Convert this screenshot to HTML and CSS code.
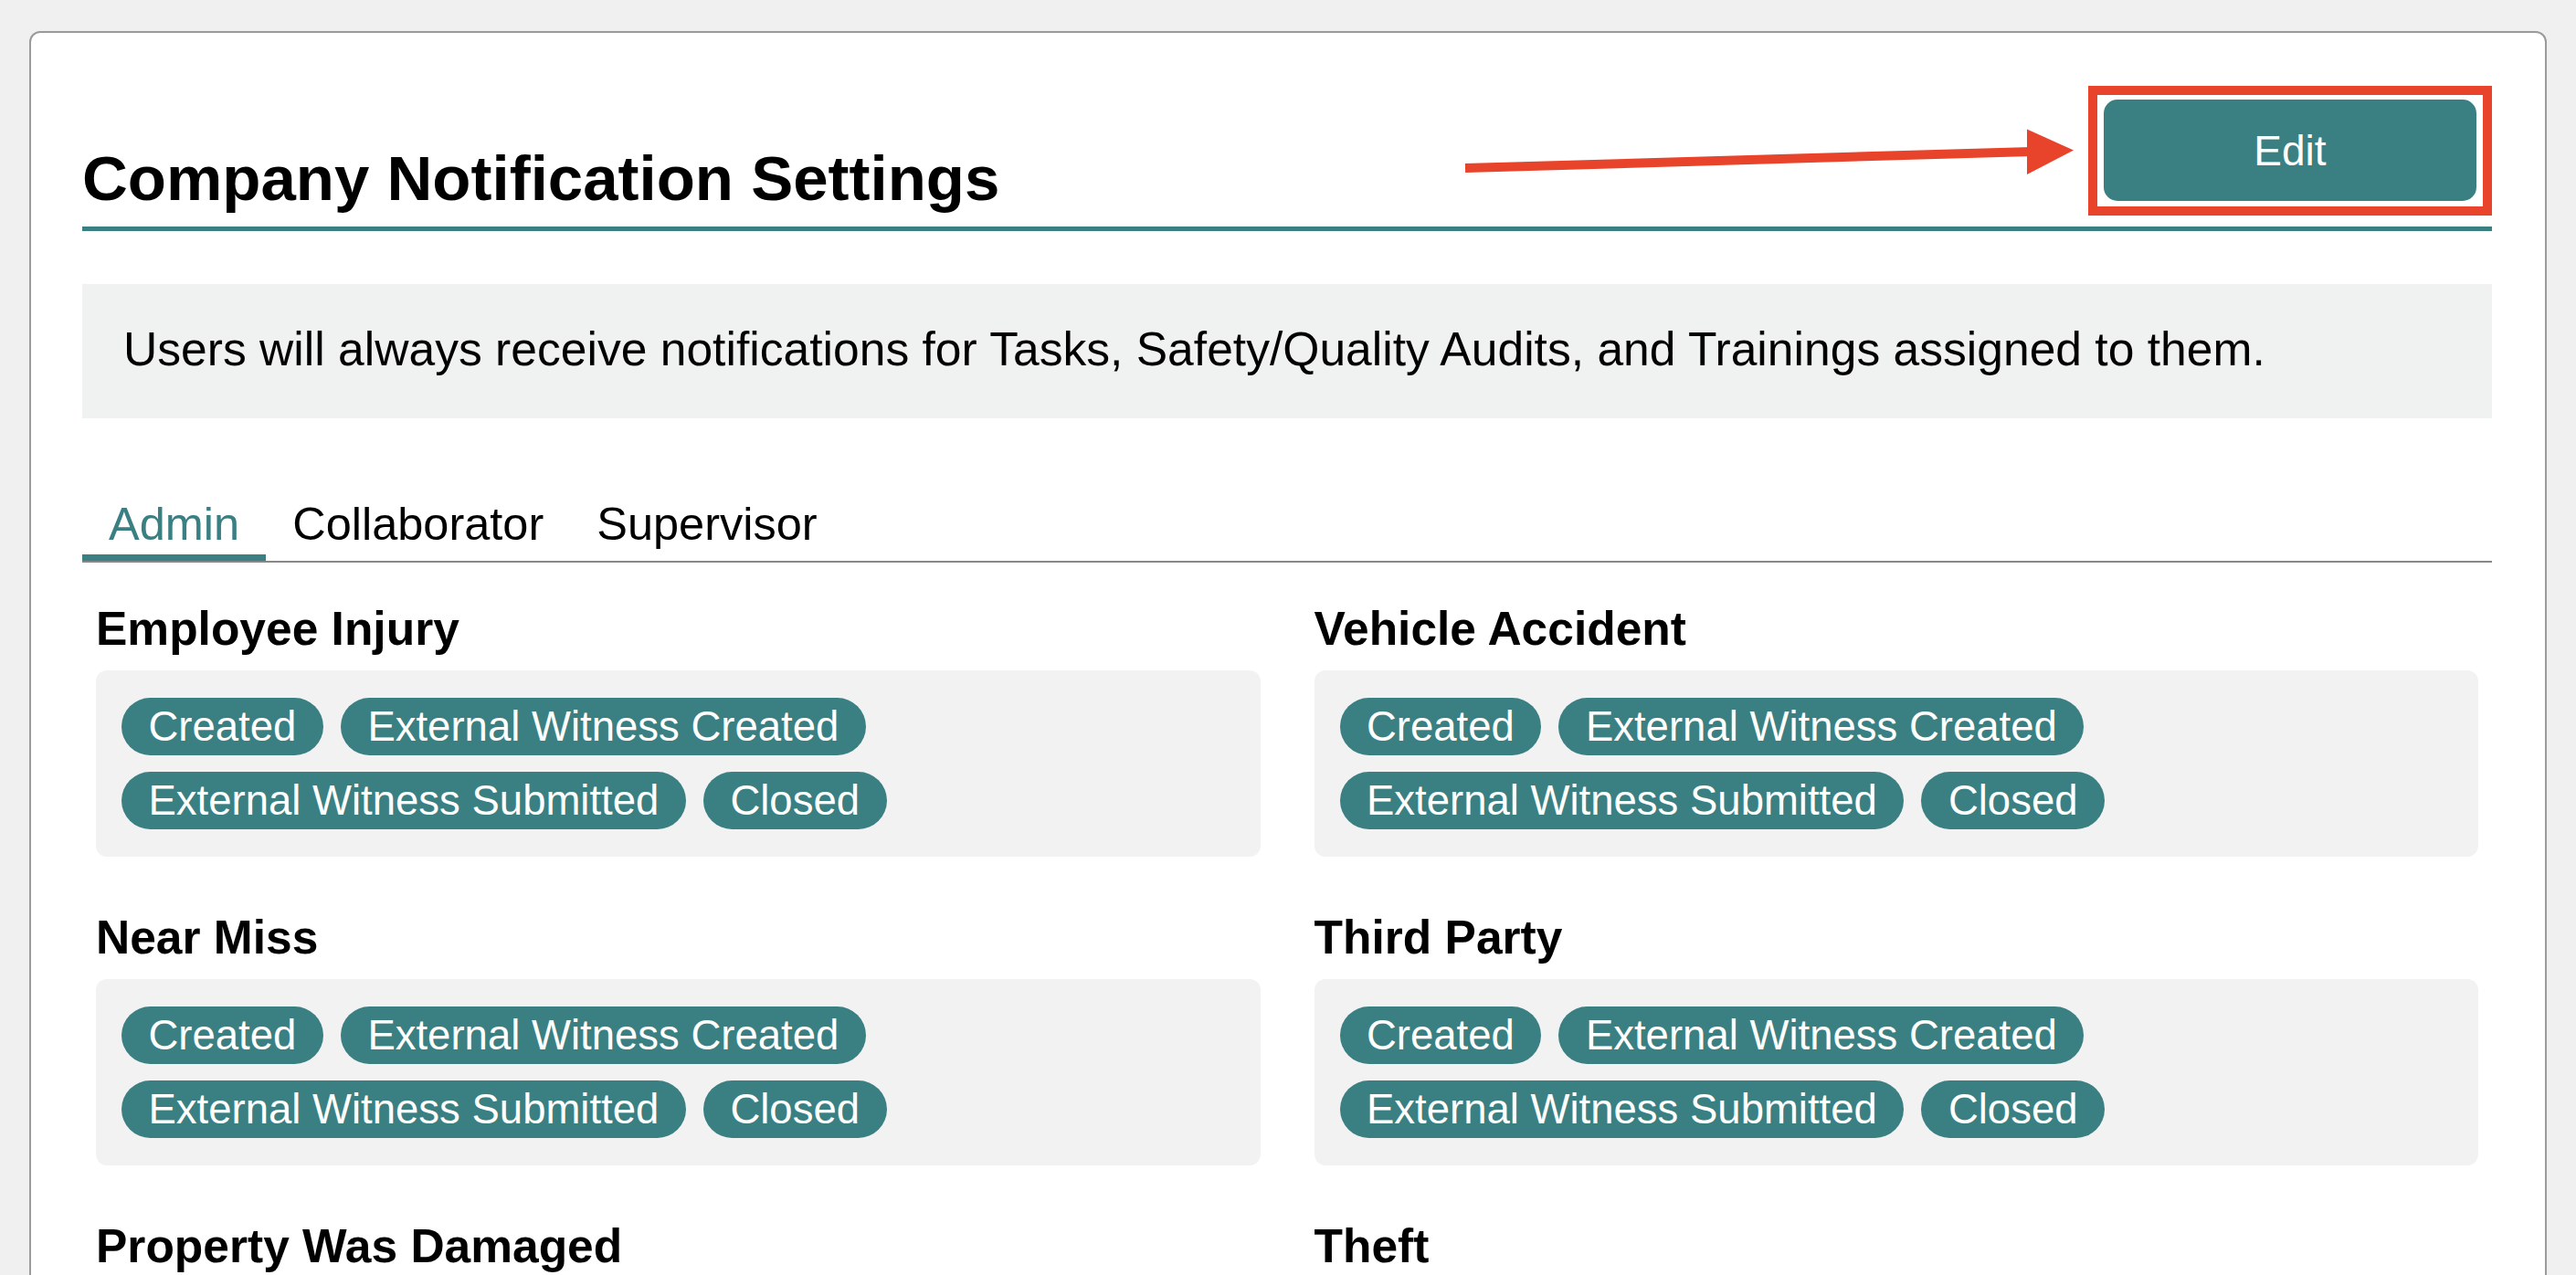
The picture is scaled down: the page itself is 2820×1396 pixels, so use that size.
FILE: index.html
```html
<!DOCTYPE html>
<html lang="en">
<head>
    <meta charset="UTF-8">
    <meta name="viewport" content="width=device-width, initial-scale=1.0">
    <title>Company Notification Settings</title>
    <link rel="stylesheet" href="styles.css">
</head>
<body>
    <div class="card">
        <!-- Header -->
        <div class="card-header">
            <h1>Company Notification Settings</h1>
            <div class="callout">
                <button class="edit-btn" type="button">Edit</button>
            </div>
        </div>

        <div class="info-box">
            Users will always receive notifications for Tasks, Safety/Quality Audits, and Trainings assigned to them.
        </div>

        <!-- Role tabs -->
        <div class="tabs">
            <div class="tab active">Admin</div>
            <div class="tab">Collaborator</div>
            <div class="tab">Supervisor</div>
        </div>

        <div class="events">
            <div class="event">
                <h2>Employee Injury</h2>
                <div class="event-box">
                    <span class="pill">Created</span>
                    <span class="pill">External Witness Created</span>
                    <span class="pill">External Witness Submitted</span>
                    <span class="pill">Closed</span>
                </div>
            </div>
            <div class="event">
                <h2>Vehicle Accident</h2>
                <div class="event-box">
                    <span class="pill">Created</span>
                    <span class="pill">External Witness Created</span>
                    <span class="pill">External Witness Submitted</span>
                    <span class="pill">Closed</span>
                </div>
            </div>
            <div class="event">
                <h2>Near Miss</h2>
                <div class="event-box">
                    <span class="pill">Created</span>
                    <span class="pill">External Witness Created</span>
                    <span class="pill">External Witness Submitted</span>
                    <span class="pill">Closed</span>
                </div>
            </div>
            <div class="event">
                <h2>Third Party</h2>
                <div class="event-box">
                    <span class="pill">Created</span>
                    <span class="pill">External Witness Created</span>
                    <span class="pill">External Witness Submitted</span>
                    <span class="pill">Closed</span>
                </div>
            </div>
            <div class="event">
                <h2>Property Was Damaged</h2>
                <div class="event-box">
                    <span class="pill">Created</span>
                    <span class="pill">External Witness Created</span>
                    <span class="pill">External Witness Submitted</span>
                    <span class="pill">Closed</span>
                </div>
            </div>
            <div class="event">
                <h2>Theft</h2>
                <div class="event-box">
                    <span class="pill">Created</span>
                    <span class="pill">External Witness Created</span>
                    <span class="pill">External Witness Submitted</span>
                    <span class="pill">Closed</span>
                </div>
            </div>
        </div>
    </div>

    <!-- arrow pointing at the Edit button -->
    <svg class="arrow" width="2820" height="260" viewBox="0 0 2820 260">
        <line x1="1604" y1="184" x2="2224" y2="166" stroke="#e8432b" stroke-width="10"/>
        <polygon points="2219,141.5 2270,164.5 2219,191" fill="#e8432b"/>
    </svg>
</body>
</html>
```

FILE: styles.css
```css
:root {
    --teal: #3a7f82;
    --mark: #e8432b;
}

body {
    margin: 0;
    background: #f0f0f0;
    font-family: "Liberation Sans", Arial, Helvetica, sans-serif;
    color: #000;
}

.card {
    margin: 34px 32px 0;
    background: #fff;
    border: 2px solid #9a9a9a;
    border-radius: 12px;
    padding: 58px 58px 80px 56px;
}

/* Header */
.card-header {
    display: flex;
    justify-content: space-between;
    align-items: flex-end;
    padding-bottom: 10px;
    border-bottom: 5px solid var(--teal);
}

h1 {
    margin: 0;
    font-size: 69px;
    line-height: 84px;
    font-weight: bold;
}

/* red frame round the Edit button */
.callout {
    display: flex;
    margin-bottom: 2px;
    padding: 5px 7px 6px;
    border: 10px solid var(--mark);
}

.edit-btn {
    width: 408px;
    height: 111px;
    background: var(--teal);
    color: #fff;
    border: none;
    border-radius: 15px;
    font-family: inherit;
    font-size: 46px;
}

.info-box {
    margin-top: 58px;
    background: #f0f2f1;
    padding: 41px 45px 45px;
    font-size: 51.6px;
    line-height: 61px;
}

/* Tabs */
.tabs {
    display: flex;
    margin-top: 86px;
    border-bottom: 2px solid #888;
}

.tab {
    padding: 0 29px 3px;
    font-size: 50.5px;
    line-height: 60px;
    border-bottom: 7px solid transparent;
}

.tab.active {
    color: var(--teal);
    border-bottom-color: var(--teal);
}

/* Event sections */
.events {
    display: grid;
    grid-template-columns: 1fr 1fr;
    column-gap: 59px;
    row-gap: 58px;
    padding: 0 15px;
    margin-top: 42px;
}

.event h2 {
    margin: 0 0 16px;
    font-size: 51.5px;
    line-height: 60px;
    font-weight: bold;
}

.event-box {
    display: flex;
    flex-wrap: wrap;
    gap: 18px 19px;
    padding: 30px 28px;
    background: #f2f2f2;
    border-radius: 12px;
}

.pill {
    background: var(--teal);
    color: #fff;
    font-size: 45.5px;
    line-height: 63px;
    padding: 0 29.5px;
    border-radius: 32px;
}

.arrow {
    position: absolute;
    top: 0;
    left: 0;
    pointer-events: none;
}
```
